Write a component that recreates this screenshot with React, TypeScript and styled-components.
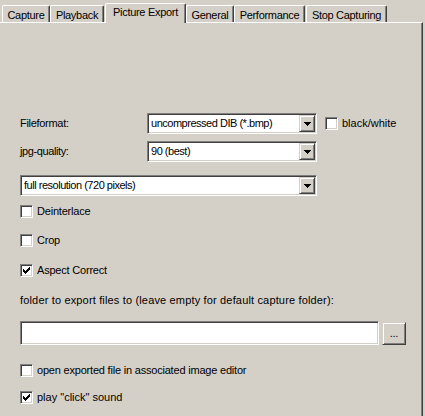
import React from "react";
import styled, { createGlobalStyle } from "styled-components";

const C = {
  face: "#d4d0c8",
  light: "#ffffff",
  shadow: "#808080",
  dark: "#404040",
};

const Global = createGlobalStyle`
  html, body { margin: 0; padding: 0; background: ${C.face}; }
  body {
    font-family: "Liberation Sans", Arial, sans-serif;
    font-size: 11px;
    letter-spacing: -0.3px;
    color: #000;
  }
`;

const Window = styled.div`
  width: 425px;
  height: 416px;
  background: ${C.face};
  overflow: hidden;
  display: flex;
  flex-direction: column;
`;

const TabBar = styled.div`
  display: flex;
  align-items: flex-end;
  height: 22px;
  padding-left: 2px;
  position: relative;
  z-index: 1;
`;

const Tab = styled.div<{ $w: number; $gap?: number; $active?: boolean }>`
  box-sizing: border-box;
  width: ${(p) => p.$w}px;
  margin-left: ${(p) => p.$gap ?? 0}px;
  height: ${(p) => (p.$active ? 20 : 17)}px;
  margin-bottom: ${(p) => (p.$active ? -1 : 0)}px;
  padding-top: ${(p) => (p.$active ? 2 : 3)}px;
  background: ${C.face};
  border-top: 1px solid ${C.light};
  border-left: 1px solid ${C.light};
  border-right: 1px solid ${C.dark};
  border-radius: 2px 2px 0 0;
  box-shadow: inset -1px 0 ${C.shadow};
  text-align: center;
  line-height: 13px;
  white-space: nowrap;
`;

const Panel = styled.div`
  box-sizing: border-box;
  margin-left: -2px;
  width: 425px;
  flex: 1;
  border-top: 1px solid ${C.light};
  border-left: 1px solid ${C.light};
  border-right: 1px solid ${C.dark};
  box-shadow: inset -1px 0 ${C.shadow};
  padding: 90px 0 0 21px;
  display: flex;
  flex-direction: column;
  align-items: flex-start;
`;

const Row = styled.div<{ $mt?: number }>`
  display: flex;
  align-items: center;
  margin-top: ${(p) => p.$mt ?? 0}px;
`;

const Label = styled.div<{ $w?: number; $ls?: number }>`
  width: ${(p) => (p.$w ? `${p.$w}px` : "auto")};
  letter-spacing: ${(p) => p.$ls ?? -0.2}px;
  line-height: 13px;
  white-space: nowrap;
`;

const Sunken = styled.div<{ $w: number; $h: number }>`
  box-sizing: border-box;
  width: ${(p) => p.$w}px;
  height: ${(p) => p.$h}px;
  background: #fff;
  border: 1px solid;
  border-color: ${C.shadow} ${C.light} ${C.light} ${C.shadow};
  box-shadow: inset 1px 1px ${C.dark}, inset -1px -1px ${C.face};
  display: flex;
  align-items: center;
  padding: 1px 1px 1px 3px;
`;

const ComboText = styled.div`
  flex: 1;
  letter-spacing: -0.48px;
  line-height: 13px;
  white-space: nowrap;
  overflow: hidden;
`;

const DropButton = styled.div`
  box-sizing: border-box;
  width: 16px;
  height: 17px;
  background: ${C.face};
  border: 1px solid;
  border-color: ${C.face} ${C.dark} ${C.dark} ${C.face};
  box-shadow: inset 1px 1px ${C.light}, inset -1px -1px ${C.shadow};
  display: flex;
  align-items: center;
  justify-content: center;
`;

const PushButton = styled.div`
  box-sizing: border-box;
  width: 24px;
  height: 23px;
  margin-left: 3px;
  background: ${C.face};
  border: 1px solid;
  border-color: ${C.face} ${C.dark} ${C.dark} ${C.face};
  box-shadow: inset 1px 1px ${C.light}, inset -1px -1px ${C.shadow};
  display: flex;
  align-items: center;
  justify-content: center;
  line-height: 13px;
  padding-top: 1px;
`;

const Box = styled.div<{ $ml?: number }>`
  box-sizing: border-box;
  width: 13px;
  height: 13px;
  margin-left: ${(p) => p.$ml ?? 0}px;
  margin-right: 4px;
  background: #fff;
  border: 1px solid;
  border-color: ${C.shadow} ${C.light} ${C.light} ${C.shadow};
  box-shadow: inset 1px 1px ${C.dark}, inset -1px -1px ${C.face};
  display: flex;
  align-items: center;
  justify-content: center;
`;

const Arrow = () => (
  <svg width="7" height="4" viewBox="0 0 7 4" shapeRendering="crispEdges">
    <rect x="0" y="0" width="7" height="1" fill="#000" />
    <rect x="1" y="1" width="5" height="1" fill="#000" />
    <rect x="2" y="2" width="3" height="1" fill="#000" />
    <rect x="3" y="3" width="1" height="1" fill="#000" />
  </svg>
);

const checkRows: [number, number, number][] = [
  [0, 6, 1],
  [1, 5, 2],
  [2, 0, 1],
  [2, 4, 3],
  [3, 0, 2],
  [3, 3, 3],
  [4, 0, 5],
  [5, 1, 3],
  [6, 2, 1],
];

const Check = () => (
  <svg width="7" height="7" viewBox="0 0 7 7" shapeRendering="crispEdges">
    {checkRows.map(([y, x, w], i) => (
      <rect key={i} x={x} y={y} width={w} height={1} fill="#000" />
    ))}
  </svg>
);

const Combo = ({ w, text }: { w: number; text: string }) => (
  <Sunken $w={w} $h={21}>
    <ComboText>{text}</ComboText>
    <DropButton>
      <Arrow />
    </DropButton>
  </Sunken>
);

const CheckBox = ({
  checked,
  label,
  ml,
  ls,
}: {
  checked?: boolean;
  label: string;
  ml?: number;
  ls?: number;
}) => (
  <>
    <Box $ml={ml}>{checked && <Check />}</Box>
    <Label $ls={ls}>{label}</Label>
  </>
);

const tabs = [
  { label: "Capture", w: 48 },
  { label: "Playback", w: 54 },
  { label: "Picture Export", w: 81, gap: 1, active: true },
  { label: "General", w: 48 },
  { label: "Performance", w: 71 },
  { label: "Stop Capturing", w: 81, gap: 1 },
];

export default function App() {
  return (
    <>
      <Global />
      <Window>
        <TabBar>
          {tabs.map((t) => (
            <Tab key={t.label} $w={t.w} $gap={t.gap} $active={t.active}>
              {t.label}
            </Tab>
          ))}
        </TabBar>
        <Panel>
          <Row>
            <Label $w={127} $ls={-0.3}>
              Fileformat:
            </Label>
            <Combo w={170} text="uncompressed DIB (*.bmp)" />
            <CheckBox label="black/white" ml={8} ls={0} />
          </Row>
          <Row $mt={7}>
            <Label $w={127} $ls={-0.4}>
              jpg-quality:
            </Label>
            <Combo w={170} text="90 (best)" />
          </Row>
          <Row $mt={13}>
            <Combo w={297} text="full resolution (720 pixels)" />
          </Row>
          <Row $mt={9}>
            <CheckBox label="Deinterlace" />
          </Row>
          <Row $mt={16}>
            <CheckBox label="Crop" />
          </Row>
          <Row $mt={17}>
            <CheckBox checked label="Aspect Correct" />
          </Row>
          <Row $mt={17}>
            <Label $ls={0.16}>
              folder to export files to (leave empty for default capture
              folder):
            </Label>
          </Row>
          <Row $mt={14}>
            <Sunken $w={359} $h={24} />
            <PushButton>...</PushButton>
          </Row>
          <Row $mt={19}>
            <CheckBox label="open exported file in associated image editor" />
          </Row>
          <Row $mt={14}>
            <CheckBox checked label='play "click" sound' ls={0} />
          </Row>
        </Panel>
      </Window>
    </>
  );
}
